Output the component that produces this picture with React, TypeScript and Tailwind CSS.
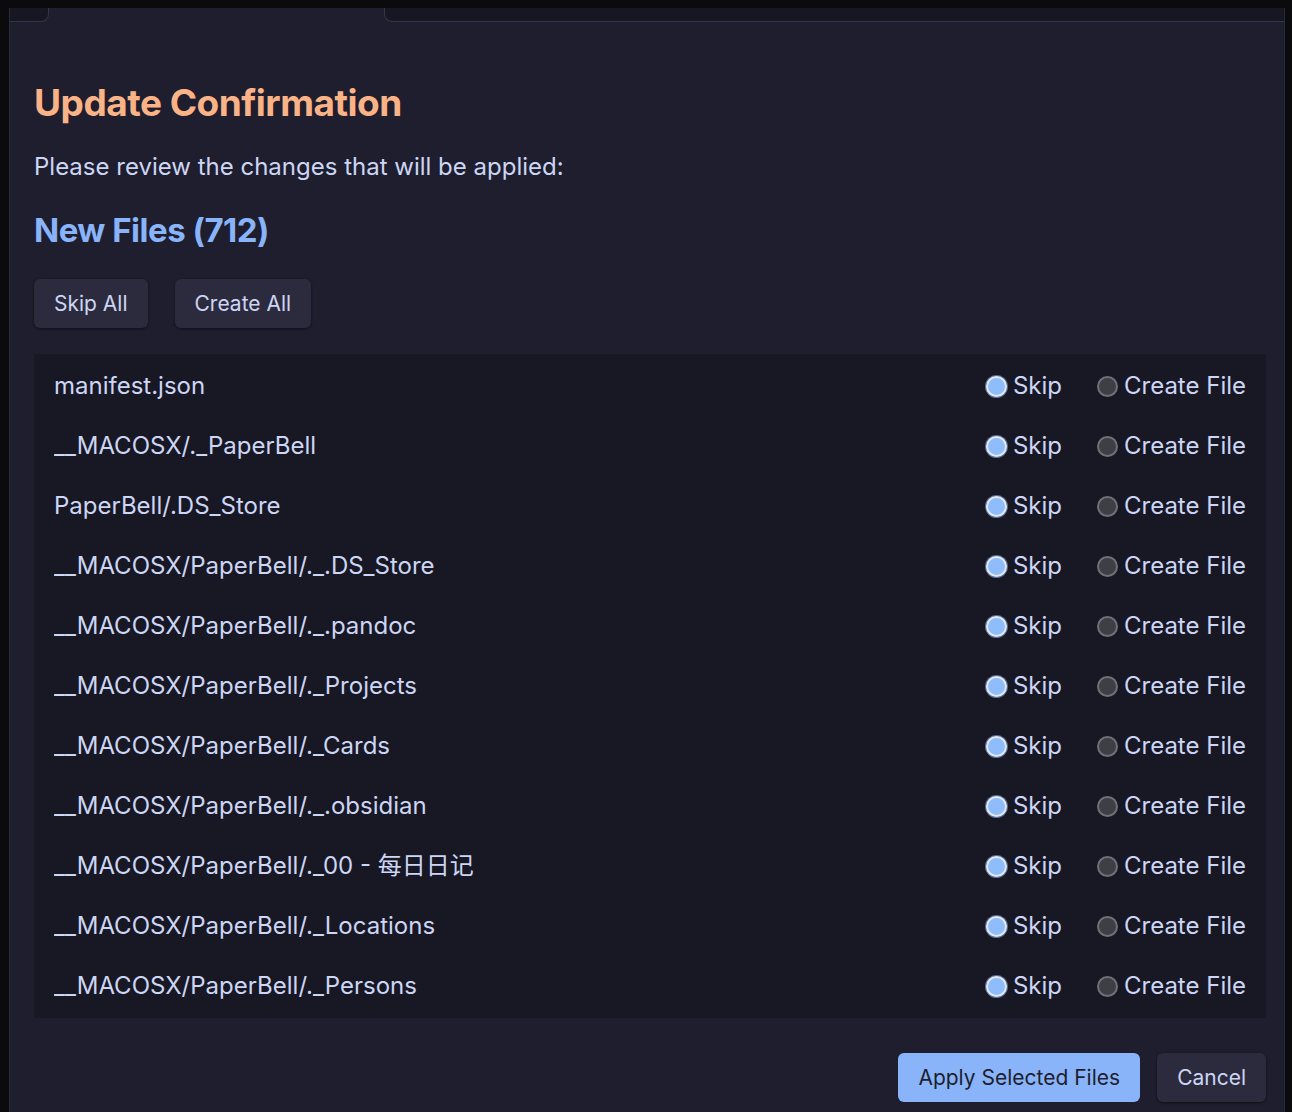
import { useState } from 'react'

const files = [
  'manifest.json',
  '__MACOSX/._PaperBell',
  'PaperBell/.DS_Store',
  '__MACOSX/PaperBell/._.DS_Store',
  '__MACOSX/PaperBell/._.pandoc',
  '__MACOSX/PaperBell/._Projects',
  '__MACOSX/PaperBell/._Cards',
  '__MACOSX/PaperBell/._.obsidian',
  '__MACOSX/PaperBell/._00 - 每日日记',
  '__MACOSX/PaperBell/._Locations',
  '__MACOSX/PaperBell/._Persons',
]

function Radio({ checked }: { checked: boolean }) {
  return (
    <span
      className={`inline-block w-[21px] h-[21px] rounded-full border-2 ${
        checked
          ? 'bg-[#8fbcfb] border-[#e2e8f4] ring-1 ring-[#5a6e92]'
          : 'bg-[#3e3e44] border-[#707078]'
      }`}
    />
  )
}

export default function App() {
  const [choices, setChoices] = useState<Record<string, 'skip' | 'create'>>(
    Object.fromEntries(files.map((f) => [f, 'skip']))
  )

  const setAll = (value: 'skip' | 'create') =>
    setChoices(Object.fromEntries(files.map((f) => [f, value])))

  return (
    <div
      className="min-h-[1112px] bg-[#0b0b0d] pl-[9px] pr-[7px] pt-[8px] text-[#cdd6f4]"
      style={{ fontFamily: 'Inter, "Noto Sans CJK SC", sans-serif' }}
    >
      <div className="min-h-[1104px] bg-[#1e1e2e] border-l border-r border-[#2a2a3c] flex flex-col">
        {/* Tab strip */}
        <div className="flex h-[14px]">
          <div className="w-[39px] bg-[#171724] border-b border-r border-[#34344a] rounded-br-[8px]" />
          <div className="w-[335px]" />
          <div className="flex-1 bg-[#171724] border-b border-l border-[#34344a] rounded-bl-[8px]" />
        </div>

        <div className="pl-[24px] pr-[18px] pt-[59px]">
          <h1 className="text-[37px] font-bold leading-[44px] text-[#fab387] tracking-[-0.5px]">
            Update Confirmation
          </h1>
          <p className="mt-[26px] text-[24px] leading-[32px]">
            Please review the changes that will be applied:
          </p>
          <h2 className="mt-[27px] text-[33px] font-bold leading-[40px] text-[#89b4fa] tracking-[-0.5px]">
            New Files (712)
          </h2>

          <div className="mt-[29px] flex gap-[27px]">
            <button
              onClick={() => setAll('skip')}
              className="h-[49px] px-[20px] rounded-[6px] bg-[#2c2b3e] text-[21px] shadow-[0_1px_3px_rgba(0,0,0,0.5)]"
            >
              Skip All
            </button>
            <button
              onClick={() => setAll('create')}
              className="h-[49px] px-[20px] rounded-[6px] bg-[#2c2b3e] text-[21px] shadow-[0_1px_3px_rgba(0,0,0,0.5)]"
            >
              Create All
            </button>
          </div>

          {/* File list */}
          <div className="mt-[26px] bg-[#181825] py-[2px] px-[20px]">
            {files.map((file) => (
              <div key={file} className="h-[60px] flex items-center text-[24px]">
                <span className="flex-1 truncate">{file}</span>
                <label
                  className="flex items-center gap-[6px] cursor-pointer"
                  onClick={() => setChoices({ ...choices, [file]: 'skip' })}
                >
                  <Radio checked={choices[file] === 'skip'} />
                  <span>Skip</span>
                </label>
                <label
                  className="ml-[35px] flex items-center gap-[6px] cursor-pointer"
                  onClick={() => setChoices({ ...choices, [file]: 'create' })}
                >
                  <Radio checked={choices[file] === 'create'} />
                  <span>Create File</span>
                </label>
              </div>
            ))}
          </div>

          <div className="mt-[35px] flex justify-end gap-[17px]">
            <button className="h-[49px] px-[20px] rounded-[6px] bg-[#89b4fa] text-[#1e1e2e] text-[21px]">
              Apply Selected Files
            </button>
            <button className="h-[49px] px-[20px] rounded-[6px] bg-[#2c2b3e] text-[21px] shadow-[0_1px_3px_rgba(0,0,0,0.5)]">
              Cancel
            </button>
          </div>
        </div>
      </div>
    </div>
  )
}
